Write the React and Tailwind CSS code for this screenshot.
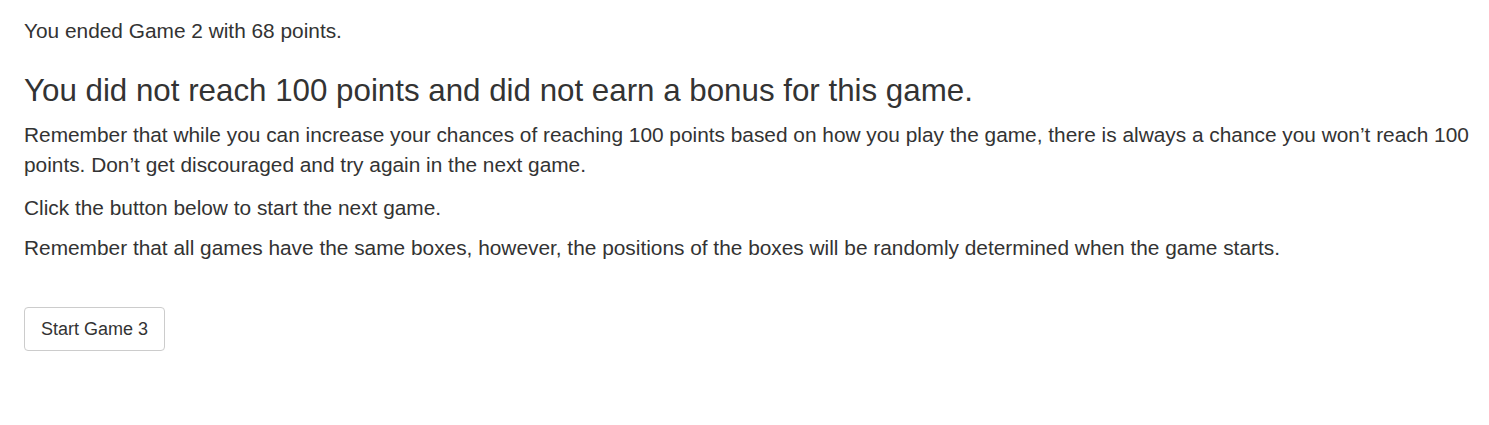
export default function App() {
  return (
    <div className="min-h-screen bg-white pl-6 pr-4 pt-[16px] text-[#333] font-['Liberation_Sans',Arial,sans-serif]">
      <p className="text-[20.85px] leading-[30px]">You ended Game 2 with 68 points.</p>
      <h3 className="text-[31.3px] leading-[36px] mt-[27px] mb-[11px]">
        You did not reach 100 points and did not earn a bonus for this game.
      </h3>
      <p className="text-[20.85px] leading-[30px] mb-[13px]">
        Remember that while you can increase your chances of reaching 100 points based on how you play the game, there is always a chance you won’t reach 100 points. Don’t get discouraged and try again in the next game.
      </p>
      <p className="text-[20.85px] leading-[30px] mb-[10px]">Click the button below to start the next game.</p>
      <p className="text-[20.85px] leading-[30px]">
        Remember that all games have the same boxes, however, the positions of the boxes will be randomly determined when the game starts.
      </p>
      <button className="mt-[44px] h-[44px] px-[16px] border border-[#ccc] rounded-[4px] bg-white text-[18px] text-[#333]">
        Start Game 3
      </button>
    </div>
  );
}
